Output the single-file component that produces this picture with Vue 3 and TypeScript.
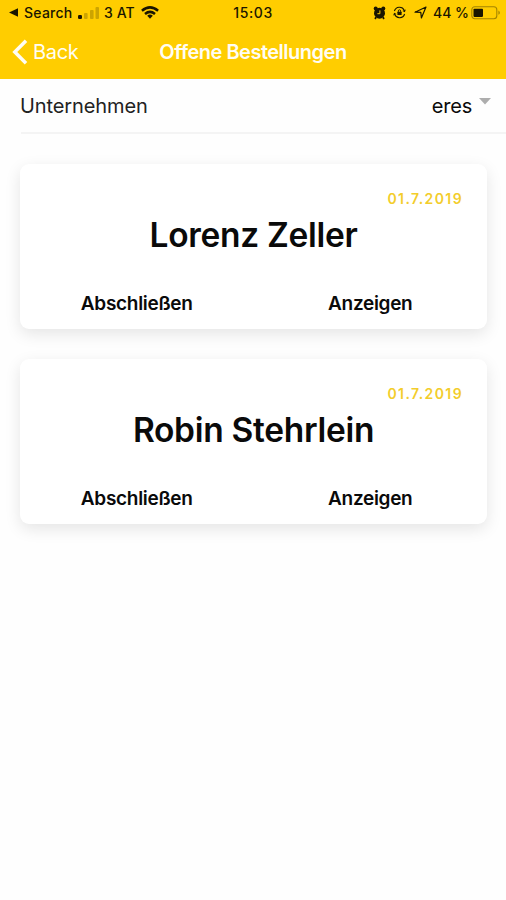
<script setup lang="ts">
interface Order {
  name: string
  date: string
}

const company = 'eres'
const orders: Order[] = [
  { name: 'Lorenz Zeller', date: '01.7.2019' },
  { name: 'Robin Stehrlein', date: '01.7.2019' },
]
</script>

<template>
  <div class="screen">
    <header class="top">
      <div class="status">
        <div class="status-left">
          <svg class="return" width="10" height="9" viewBox="0 0 10 9"><path d="M0 4.5 9 .2v8.6z" /></svg>
          <span class="search">Search</span>
          <svg class="signal" width="22" height="14" viewBox="0 0 22 14">
            <rect x="0" y="9" width="4" height="4" rx="1.2" />
            <g opacity=".22">
              <rect x="6" y="7" width="3.6" height="6" rx="1" />
              <rect x="12" y="4" width="3.6" height="9" rx="1" />
              <rect x="17.5" y="1" width="3.5" height="12" rx="1" />
            </g>
          </svg>
          <span class="carrier">3 AT</span>
          <svg class="wifi" width="18" height="13" viewBox="0 0 18 13" fill="none" stroke="#1a1600" stroke-width="2.5">
            <path d="M.9 4.8Q9-2 17.1 4.8" />
            <path d="M4 8Q9 3.8 14 8" />
            <path d="M6.2 9.7Q9 7.5 11.8 9.7L9 12.8z" fill="#1a1600" stroke="none" />
          </svg>
        </div>
        <span class="time">15:03</span>
        <div class="status-right">
          <svg width="13" height="14" viewBox="0 0 13 14">
            <circle cx="6.5" cy="7.2" r="5.5" />
            <circle cx="2.7" cy="2.4" r="2" />
            <circle cx="10.3" cy="2.4" r="2" />
            <path d="m3 11.2-.9 1.8M10 11.2l.9 1.8" stroke="#1a1600" stroke-width="1.8" />
            <path d="M6.9 4.4v3.3H4.4" fill="none" stroke="#ffcd00" />
          </svg>
          <svg class="lock" width="13" height="13" viewBox="0 0 13 13">
            <path d="M1.4 5a5.3 5.3 0 0 1 9.9-.6M11.6 8a5.3 5.3 0 0 1-9.9.6" fill="none" stroke="#1a1600" stroke-width="1.15" />
            <path d="m12.8 3.4-.9 2.8-2.5-1.2zM.2 9.6l.9-2.8L3.6 8z" />
            <rect x="4.4" y="5.8" width="4.2" height="3.3" rx=".5" />
            <path d="M5.3 6V5a1.2 1.2 0 0 1 2.4 0v1" fill="none" stroke="#1a1600" stroke-width=".9" />
          </svg>
          <svg class="location" width="13" height="13" viewBox="0 0 13 13" fill="none">
            <path d="M1 6.2 12 1 7.4 12 6.8 6.4z" stroke="#1a1600" stroke-width="1.2" stroke-linejoin="round" />
          </svg>
          <span class="percent">44 %</span>
          <svg class="battery" width="31" height="14" viewBox="0 0 31 14">
            <rect x=".8" y=".8" width="25" height="12" rx="3" fill="none" stroke="#1a1600" stroke-opacity=".4" stroke-width="1.1" />
            <rect x="2.5" y="2.7" width="9.5" height="8.2" rx=".8" />
            <path d="M27.3 4.6v4.2q1.7-.7 1.7-2.1t-1.7-2.1" opacity=".35" />
          </svg>
        </div>
      </div>
      <nav class="nav">
        <button class="back" type="button">
          <svg width="16" height="26" viewBox="0 0 16 26" fill="none" stroke="#fffdf4" stroke-width="3.5"><path d="M14 1.8 2.8 13 14 24.2" /></svg>
          <span>Back</span>
        </button>
        <h1>Offene Bestellungen</h1>
      </nav>
    </header>

    <div class="filter">
      <span class="label">Unternehmen</span>
      <span class="value">{{ company }}</span>
      <svg class="caret" width="12" height="7" viewBox="0 0 12 7"><path d="M0 0h12L6 6.5z" fill="#adadad" /></svg>
    </div>

    <main class="orders">
      <article v-for="order in orders" :key="order.name" class="card">
        <time class="date">{{ order.date }}</time>
        <h2>{{ order.name }}</h2>
        <div class="actions">
          <button class="finish" type="button">Abschließen</button>
          <button class="show" type="button">Anzeigen</button>
        </div>
      </article>
    </main>
  </div>
</template>

<style>
body {
  background: #fefefe;
}
</style>

<style scoped>
.screen {
  width: 506px;
  height: 900px;
  overflow: hidden;
  background: #fefefe;
  color: #0a0a0a;
  font-family: Inter, "Liberation Sans", sans-serif;
}
svg {
  display: block;
  flex: none;
}
button {
  padding: 0;
  border: 0;
  background: none;
  color: inherit;
  font-family: inherit;
}
h1,
h2 {
  margin: 0;
}
span,
h1,
h2,
button {
  white-space: nowrap;
}
.top {
  height: 79px;
  background: #ffcd00;
}
.status {
  display: grid;
  grid-template-columns: 200px 106px 200px;
  align-items: center;
  height: 25px;
  color: #1a1600;
  fill: #1a1600;
  font-size: 14px;
  line-height: 25px;
  font-weight: 500;
}
.status-left,
.status-right {
  display: flex;
  align-items: center;
}
.status-left {
  padding-left: 9px;
}
.search {
  width: 49px;
  margin-left: 5px;
  letter-spacing: 0.25px;
}
.signal {
  margin-left: 5px;
}
.carrier {
  width: 31px;
  margin-left: 4px;
  letter-spacing: 0.1px;
}
.wifi {
  margin-left: 6px;
}
.time {
  text-align: center;
  letter-spacing: 0.6px;
}
.status-right {
  justify-content: flex-end;
  padding-right: 4px;
}
.lock {
  margin-left: 7px;
}
.location {
  margin-left: 8px;
}
.percent {
  width: 37px;
  margin-left: 6px;
  letter-spacing: 0;
}
.battery {
  margin-left: 1px;
}
.nav {
  display: grid;
  grid-template-columns: 140px 1fr 140px;
  align-items: center;
  height: 54px;
  color: #fffdf4;
}
.back {
  display: flex;
  align-items: center;
  gap: 5px;
  padding-left: 12px;
  font-size: 20px;
  line-height: 26px;
  letter-spacing: -0.3px;
}
.nav h1 {
  font-size: 20px;
  line-height: 26px;
  font-weight: 600;
  letter-spacing: -0.5px;
  text-align: center;
}
.filter {
  display: flex;
  align-items: center;
  height: 53px;
  margin-left: 21px;
  padding-right: 15px;
  border-bottom: 2px solid #f4f4f4;
  font-size: 20px;
}
.label {
  flex: 1;
  margin-left: -1px;
  color: #222;
  letter-spacing: -0.1px;
}
.value {
  letter-spacing: -0.2px;
}
.caret {
  margin: -9px 0 0 7px;
}
.orders {
  display: flex;
  flex-direction: column;
  gap: 30px;
  padding: 30px 19px 0 20px;
}
.card {
  display: flex;
  flex-direction: column;
  height: 165px;
  border-radius: 9px;
  background: #fff;
  box-shadow: 0 5px 16px rgb(0 0 0 / 10%);
}
.date {
  align-self: flex-end;
  margin: 26px 24px 0 0;
  color: #f3cd2c;
  font-size: 14px;
  line-height: 18px;
  font-weight: 600;
  letter-spacing: 1.4px;
}
.card h2 {
  margin-top: 7px;
  font-size: 33.5px;
  line-height: 40px;
  font-weight: 600;
  letter-spacing: -0.3px;
  text-align: center;
}
.actions {
  display: grid;
  grid-template-columns: 1fr 1fr;
  margin-top: 36px;
}
.actions button {
  font-size: 19px;
  line-height: 26px;
  font-weight: 600;
  letter-spacing: -0.3px;
}
</style>
